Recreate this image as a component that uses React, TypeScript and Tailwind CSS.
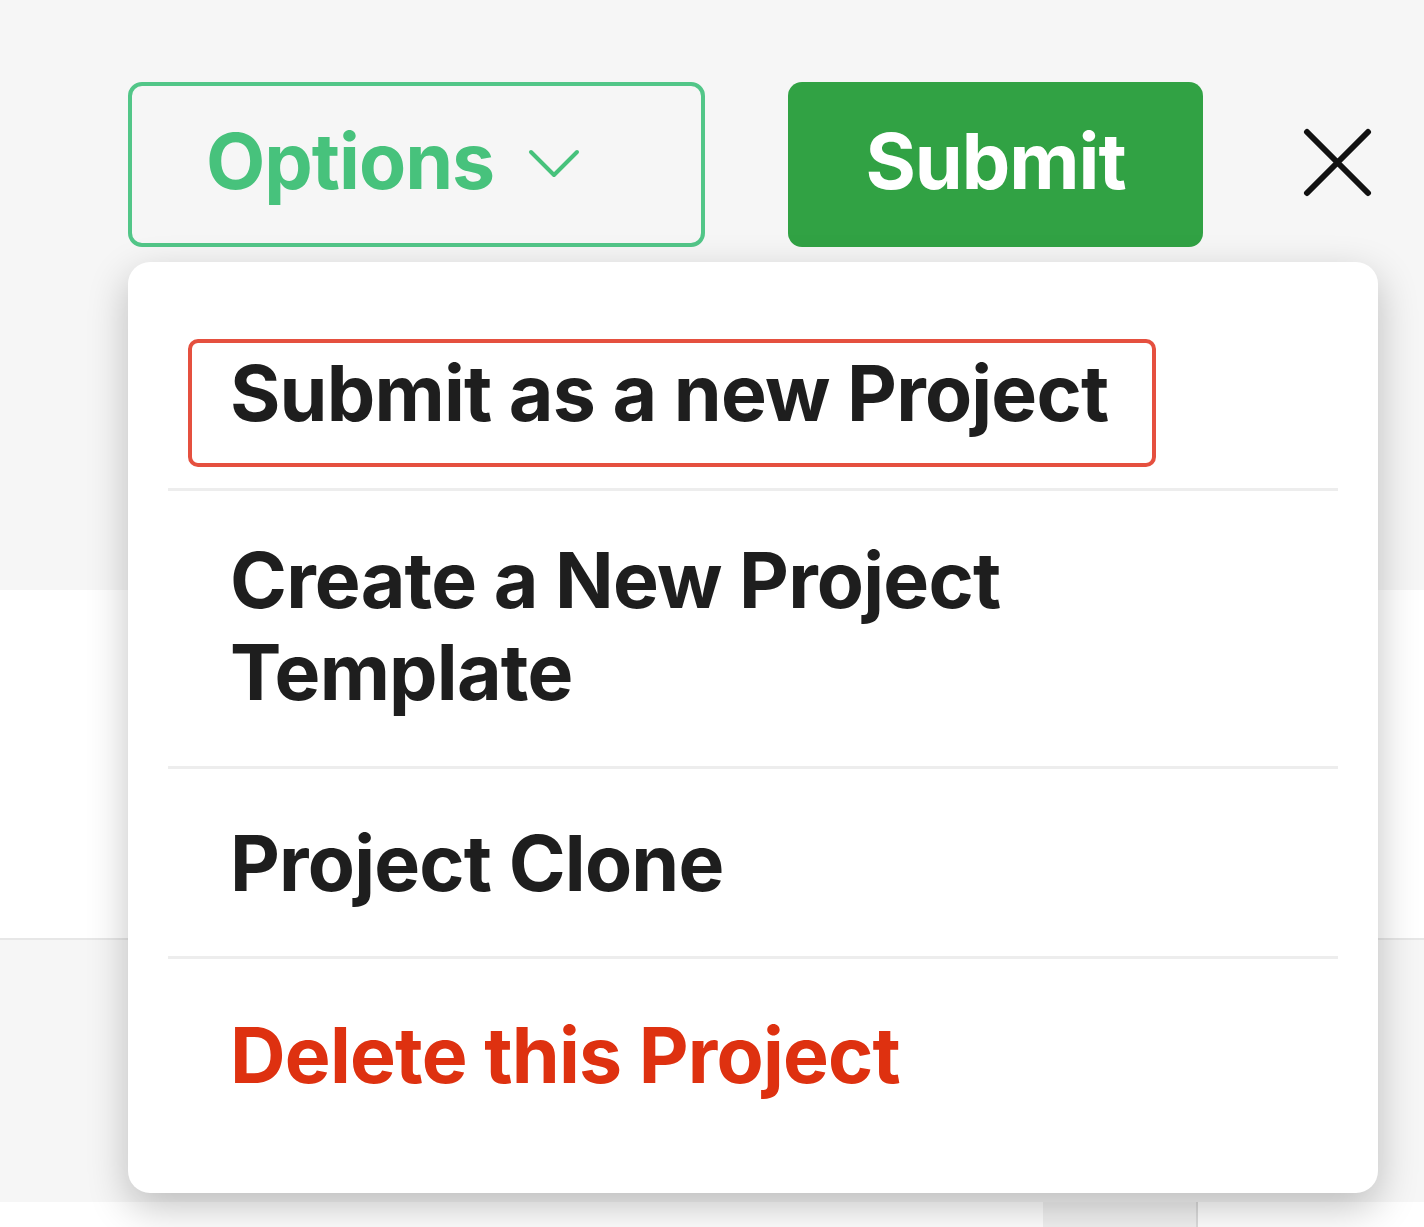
import React from 'react';

const font = { fontFamily: 'Inter, "Noto Sans", sans-serif' };

const ChevronDown: React.FC = () => (
  <svg width="52" height="32" viewBox="0 0 52 32" fill="none">
    <path d="M3 4 L26 27 L49 4" stroke="#47c27c" strokeWidth="4" strokeLinecap="round" strokeLinejoin="round" />
  </svg>
);

const CloseIcon: React.FC = () => (
  <svg width="69" height="69" viewBox="0 0 69 69" fill="none">
    <path d="M4 4 L65 65 M65 4 L4 65" stroke="#111111" strokeWidth="6" strokeLinecap="round" />
  </svg>
);

const Separator: React.FC = () => <div className="h-[3px] bg-[#ededed]" />;

const App: React.FC = () => {
  return (
    <div className="relative w-[1424px] h-[1227px] overflow-hidden bg-white" style={font}>
      {/* Header band */}
      <div className="h-[590px] bg-[#f6f6f6] pt-[82px] pl-[128px]">
        <div className="flex items-center">
          <button className="flex items-center w-[577px] h-[165px] pl-[74px] border-[4px] border-[#52c688] rounded-[14px] text-[77px] leading-none font-bold text-[#47c27c] tracking-[-1px]">
            <span className="pb-[6px]">Options</span>
            <span className="ml-[34px] mt-[-2px]">
              <ChevronDown />
            </span>
          </button>
          <button className="ml-[83px] flex items-center justify-center w-[415px] h-[165px] rounded-[14px] bg-[#31a244] text-[77px] leading-none font-bold text-white tracking-[-1px]">
            <span className="pb-[6px]">Submit</span>
          </button>
          <button className="ml-[100px] mt-[-4px]">
            <CloseIcon />
          </button>
        </div>
      </div>

      {/* Content rows behind the menu */}
      <div className="h-[350px] bg-white border-b-[2px] border-[#e7e7e7]" />
      <div className="h-[262px] bg-[#f6f6f6]" />
      <div className="flex h-[25px] bg-white">
        <div className="flex-1" />
        <div className="w-[155px] bg-[#f1f1f1] border-r-[2px] border-[#dcdcdc]" />
        <div className="w-[226px]" />
      </div>

      {/* Options dropdown */}
      <div className="absolute left-[128px] top-[262px] w-[1250px] h-[931px] rounded-[22px] bg-white px-[40px] pt-[77px] shadow-[0_14px_40px_rgba(0,0,0,0.24)] text-[77px] leading-[92px] font-bold text-[#1e1e1e] tracking-[-0.8px]">
        <div className="mx-[20px] w-[968px] rounded-[10px] border-[4px] border-[#e5503f] pl-[38px] pt-[4px] pb-[24px]">
          Submit as a new Project
        </div>
        <div className="h-[21px]" />
        <Separator />
        <div className="pl-[62px] pt-[43px] pb-[48px]">
          Create a New Project
          <br />
          Template
        </div>
        <Separator />
        <div className="pl-[62px] pt-[48px] pb-[47px]">Project Clone</div>
        <Separator />
        <div className="pl-[62px] pt-[50px] text-[#de3110]">Delete this Project</div>
      </div>
    </div>
  );
};

export default App;
